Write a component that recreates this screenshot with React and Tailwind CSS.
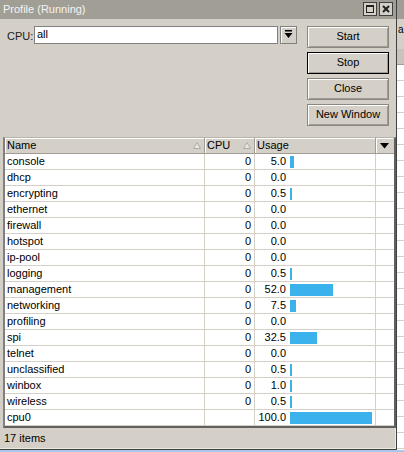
import React from 'react';

const rows = [
  { name: 'console', cpu: '0', usage: 5.0 },
  { name: 'dhcp', cpu: '0', usage: 0.0 },
  { name: 'encrypting', cpu: '0', usage: 0.5 },
  { name: 'ethernet', cpu: '0', usage: 0.0 },
  { name: 'firewall', cpu: '0', usage: 0.0 },
  { name: 'hotspot', cpu: '0', usage: 0.0 },
  { name: 'ip-pool', cpu: '0', usage: 0.0 },
  { name: 'logging', cpu: '0', usage: 0.5 },
  { name: 'management', cpu: '0', usage: 52.0 },
  { name: 'networking', cpu: '0', usage: 7.5 },
  { name: 'profiling', cpu: '0', usage: 0.0 },
  { name: 'spi', cpu: '0', usage: 32.5 },
  { name: 'telnet', cpu: '0', usage: 0.0 },
  { name: 'unclassified', cpu: '0', usage: 0.5 },
  { name: 'winbox', cpu: '0', usage: 1.0 },
  { name: 'wireless', cpu: '0', usage: 0.5 },
  { name: 'cpu0', cpu: '', usage: 100.0 },
];

const SortArrow = () => (
  <svg width="8" height="7" viewBox="0 0 8 7" className="shrink-0">
    <polygon points="4,0.5 7.5,6.5 0.5,6.5" fill="#e8e6e0" stroke="#b0aca4" strokeWidth="1" />
  </svg>
);

const WinButton = ({ children, def }) => (
  <button
    className={
      'w-[82px] h-[22px] bg-[#d4d0c8] text-[11px] text-black flex items-center justify-center shadow-[inset_1px_1px_0_#ffffff,inset_-1px_-1px_0_#a09c94] ' +
      (def ? 'border border-black' : 'border border-[#8a877f]')
    }
  >
    {children}
  </button>
);

const App = () => {
  return (
    <div className="w-[404px] h-[452px] overflow-hidden bg-[#d4d0c8] font-['Liberation_Sans',Arial,sans-serif] text-[11px] text-black leading-none">
      <div className="flex h-[450px]">
        <div className="w-[397px] h-[450px] flex flex-col bg-[#d4d0c8] border-r border-b border-[#404040]">
          {/* title bar */}
          <div className="h-[19px] bg-[#a19e96] flex items-center justify-between pl-[3px] pr-[3px]">
            <span className="text-[11px] text-[#f4f4f4]">Profile (Running)</span>
            <div className="flex gap-[2px]">
              <div className="w-[14px] h-[14px] bg-[#d4d0c8] border border-[#404040] flex items-center justify-center">
                <div className="w-[8px] h-[8px] border border-[#202020] border-t-2"></div>
              </div>
              <div className="w-[14px] h-[14px] bg-[#d4d0c8] border border-[#404040] flex items-center justify-center">
                <svg width="8" height="8" viewBox="0 0 8 8">
                  <path d="M1 1L7 7M7 1L1 7" stroke="#202020" strokeWidth="2" />
                </svg>
              </div>
            </div>
          </div>

          {/* top controls */}
          <div className="h-[119px] flex pt-[7px]">
            <div className="flex items-start pl-[7px]">
              <span className="mt-[5px] w-[27px] text-[#202020]">CPU:</span>
              <div className="w-[244px] h-[18px] bg-white border border-[#808080] flex items-center pl-[2px]">
                all
              </div>
              <div className="ml-[2px] w-[17px] h-[18px] border border-[#808080] bg-[#d4d0c8] shadow-[inset_1px_1px_0_#ffffff] flex items-center justify-center">
                <svg width="9" height="9" viewBox="0 0 9 9">
                  <rect x="1" y="0" width="7" height="1.5" fill="#000" />
                  <polygon points="0.5,3 8.5,3 4.5,8" fill="#000" />
                </svg>
              </div>
            </div>
            <div className="ml-[10px] flex flex-col gap-[4px]">
              <WinButton>Start</WinButton>
              <WinButton def>Stop</WinButton>
              <WinButton>Close</WinButton>
              <WinButton>New Window</WinButton>
            </div>
          </div>

          {/* table */}
          <div className="ml-[3px] w-[393px] flex-1 flex flex-col border-l-2 border-r-2 border-b-2 border-t border-l-[#808080] border-r-[#606060] border-b-[#606060] border-t-[#b8b4ac] bg-white">
            <div className="flex h-[16px] bg-[#d4d0c8] border-b border-[#a09c94]">
              <div className="w-[200px] flex items-center justify-between pl-[2px] pr-[3px] border-r border-[#a09c94] shadow-[inset_1px_1px_0_#ffffff]">
                <span>Name</span>
                <SortArrow />
              </div>
              <div className="w-[50px] flex items-center justify-between pl-[2px] pr-[3px] border-r border-[#a09c94] shadow-[inset_1px_1px_0_#ffffff]">
                <span>CPU</span>
                <SortArrow />
              </div>
              <div className="w-[121px] flex items-center pl-[2px] border-r border-[#a09c94] shadow-[inset_1px_1px_0_#ffffff]">
                <span>Usage</span>
              </div>
              <div className="w-[17px] flex items-center justify-center shadow-[inset_1px_1px_0_#ffffff]">
                <svg width="9" height="6" viewBox="0 0 9 6">
                  <polygon points="0,0 9,0 4.5,5.5" fill="#000" />
                </svg>
              </div>
            </div>
            {rows.map((r) => (
              <div key={r.name} className="flex h-[16px] border-b border-[#d4d0c8]">
                <div className="w-[200px] flex items-center pl-[2px] border-r border-[#d4d0c8]">{r.name}</div>
                <div className="w-[50px] flex items-center justify-end pr-[3px] border-r border-[#d4d0c8]">{r.cpu}</div>
                <div className="w-[121px] flex items-center border-r border-[#d4d0c8]">
                  <span className="w-[31px] text-right">{r.usage.toFixed(1)}</span>
                  {r.usage > 0 && (
                    <div
                      className="ml-[4px] h-[12px] bg-[#3bb2ec]"
                      style={{ width: Math.max(2, Math.round(r.usage * 0.82)) + 'px' }}
                    ></div>
                  )}
                </div>
                <div className="w-[17px]"></div>
              </div>
            ))}
            <div className="flex-1"></div>
          </div>

          {/* status bar */}
          <div className="h-[21px] flex items-center pl-[4px] shadow-[inset_-1px_-1px_0_#ece9e2]">17 items</div>
        </div>

        {/* background window strip */}
        <div className="flex-1 flex flex-col">
          <div className="h-[19px] bg-[#a19e96]"></div>
          <div className="h-[30px] bg-[#d4d0c8] pt-[6px] pl-[1px] text-[10px]">a</div>
          <div className="h-[16px] bg-[#c8c4bc] border-b border-[#a09c94]"></div>
          <div className="flex-1 bg-white bg-[linear-gradient(to_bottom,transparent_15px,#d4d0c8_15px)] bg-[length:100%_16px]"></div>
        </div>
      </div>
      <div className="h-[2px] bg-[#a8c8ec]"></div>
    </div>
  );
};

export default App;
